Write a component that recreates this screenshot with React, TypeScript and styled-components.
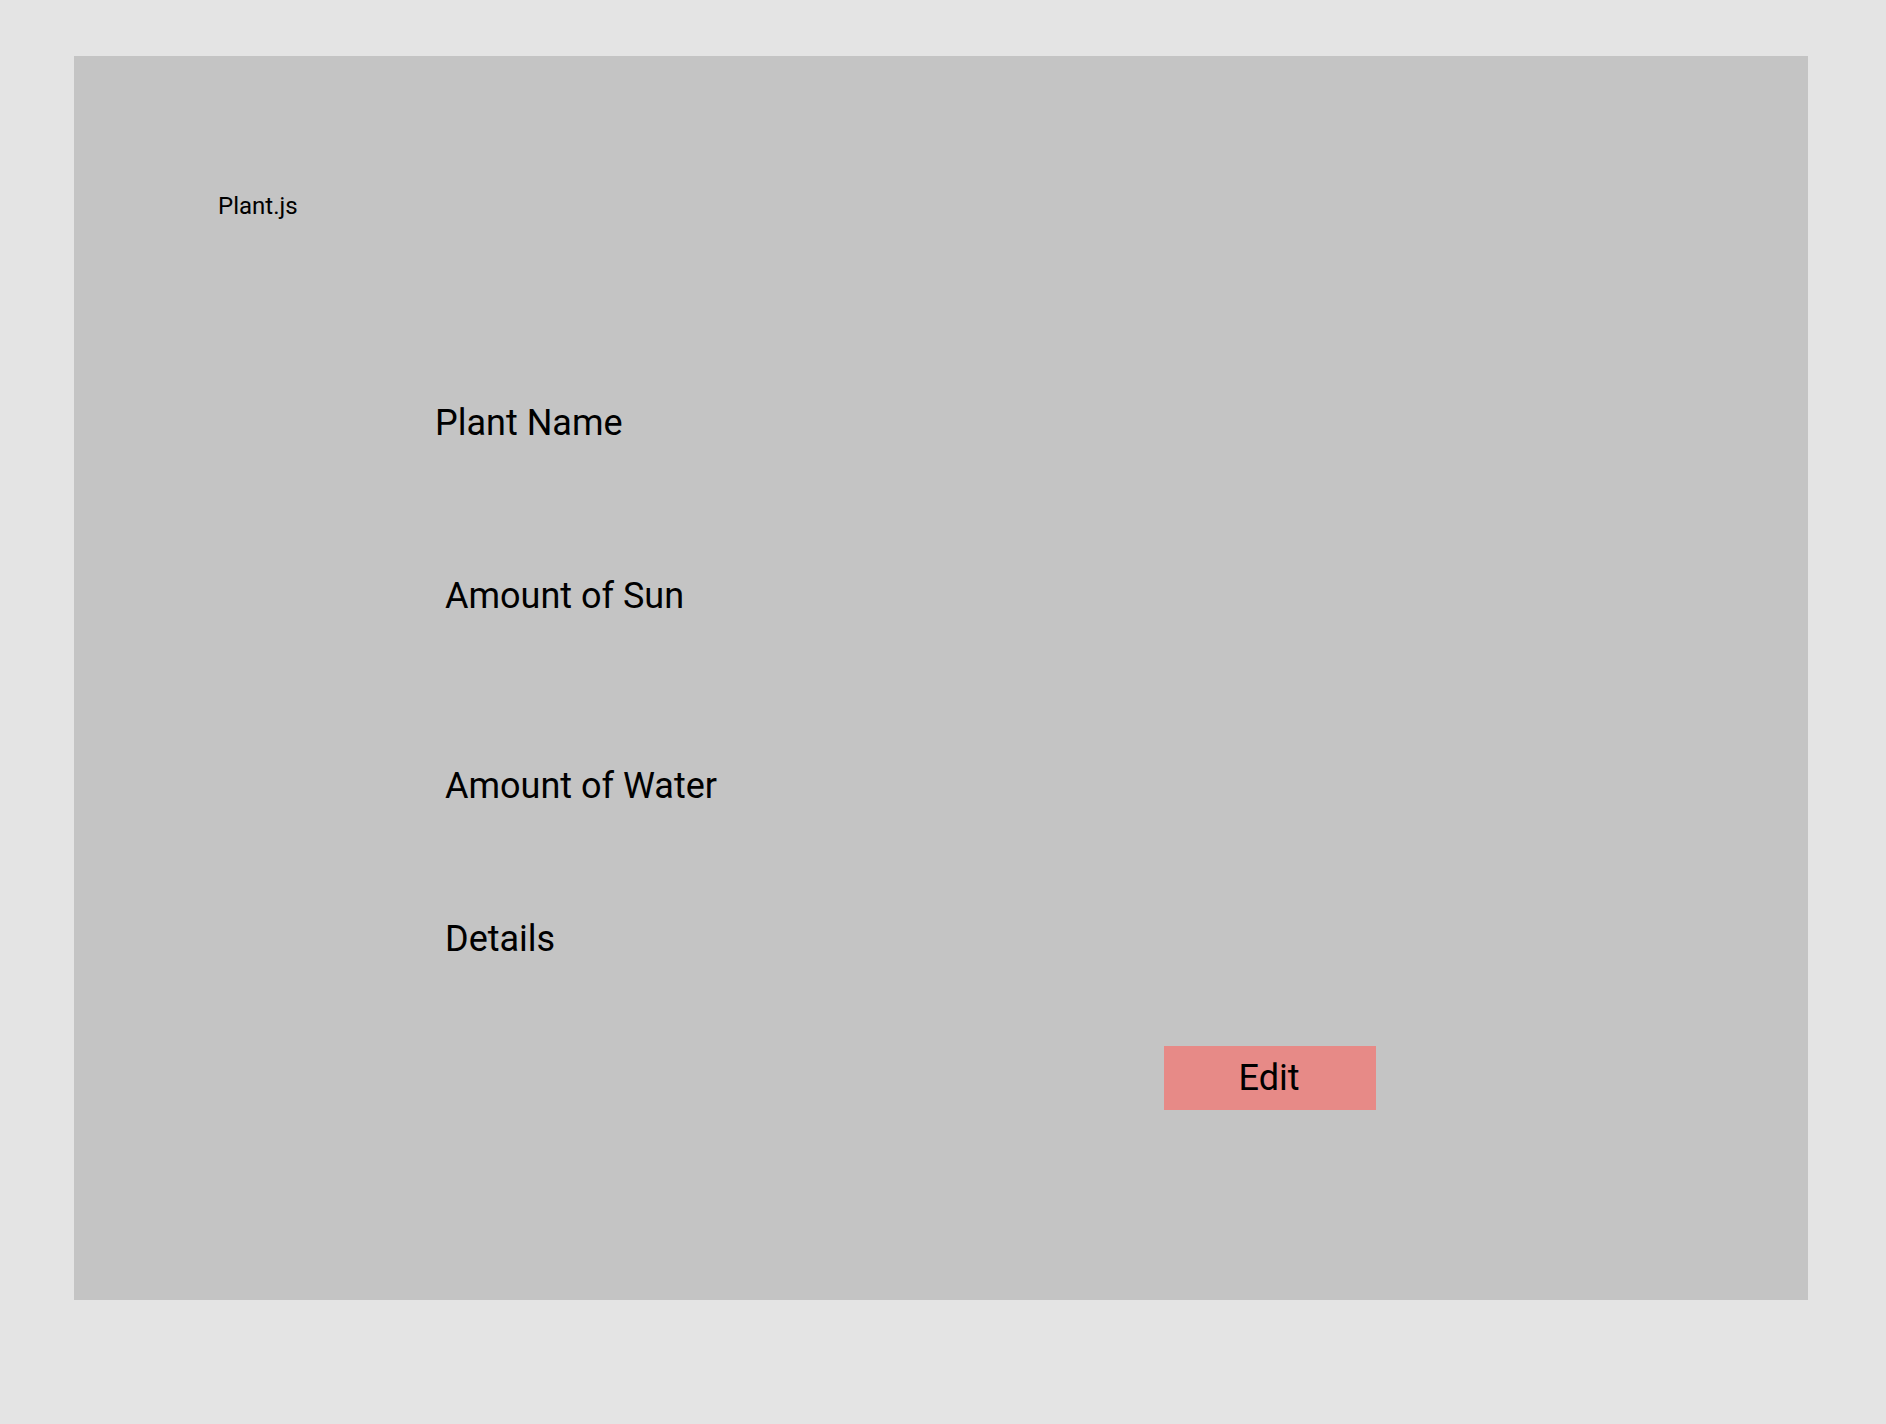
import React from "react";
import styled, { createGlobalStyle } from "styled-components";

const GlobalStyle = createGlobalStyle`
  html, body {
    margin: 0;
    padding: 0;
    background: #e4e4e4;
    font-family: Roboto, "Liberation Sans", Arial, sans-serif;
    color: #000;
  }
  body {
    min-height: 1424px;
  }
`;

const Page = styled.div`
  padding: 56px 0 0 74px;
`;

const Panel = styled.section`
  box-sizing: border-box;
  width: 1734px;
  height: 1244px;
  background: #c4c4c4;
  padding: 137px 0 0 144px;
  display: flex;
  flex-direction: column;
  align-items: flex-start;
`;

const FileName = styled.div`
  font-size: 24px;
  line-height: 26px;
`;

const FieldList = styled.div`
  display: flex;
  flex-direction: column;
  align-items: flex-start;
`;

const Field = styled.div<{ $top: number; $indent: number }>`
  margin-top: ${(p) => p.$top}px;
  margin-left: ${(p) => p.$indent}px;
  font-size: 36px;
  line-height: 42px;
`;

const EditButton = styled.button`
  margin-top: 86px;
  margin-left: 946px;
  width: 212px;
  height: 64px;
  border: none;
  padding: 0 2px 0 0;
  background: #e78a87;
  font-family: Roboto, "Liberation Sans", Arial, sans-serif;
  font-size: 36px;
  line-height: 64px;
  color: #000;
  text-align: center;
  cursor: pointer;
`;

const fields = [
  { label: "Plant Name", top: 183, indent: 217 },
  { label: "Amount of Sun", top: 131, indent: 227 },
  { label: "Amount of Water", top: 148, indent: 227 },
  { label: "Details", top: 111, indent: 227 },
];

export default function App() {
  return (
    <>
      <GlobalStyle />
      <Page>
        <Panel>
          <FileName>Plant.js</FileName>
          <FieldList>
            {fields.map((f) => (
              <Field key={f.label} $top={f.top} $indent={f.indent}>
                {f.label}
              </Field>
            ))}
          </FieldList>
          <EditButton>Edit</EditButton>
        </Panel>
      </Page>
    </>
  );
}
